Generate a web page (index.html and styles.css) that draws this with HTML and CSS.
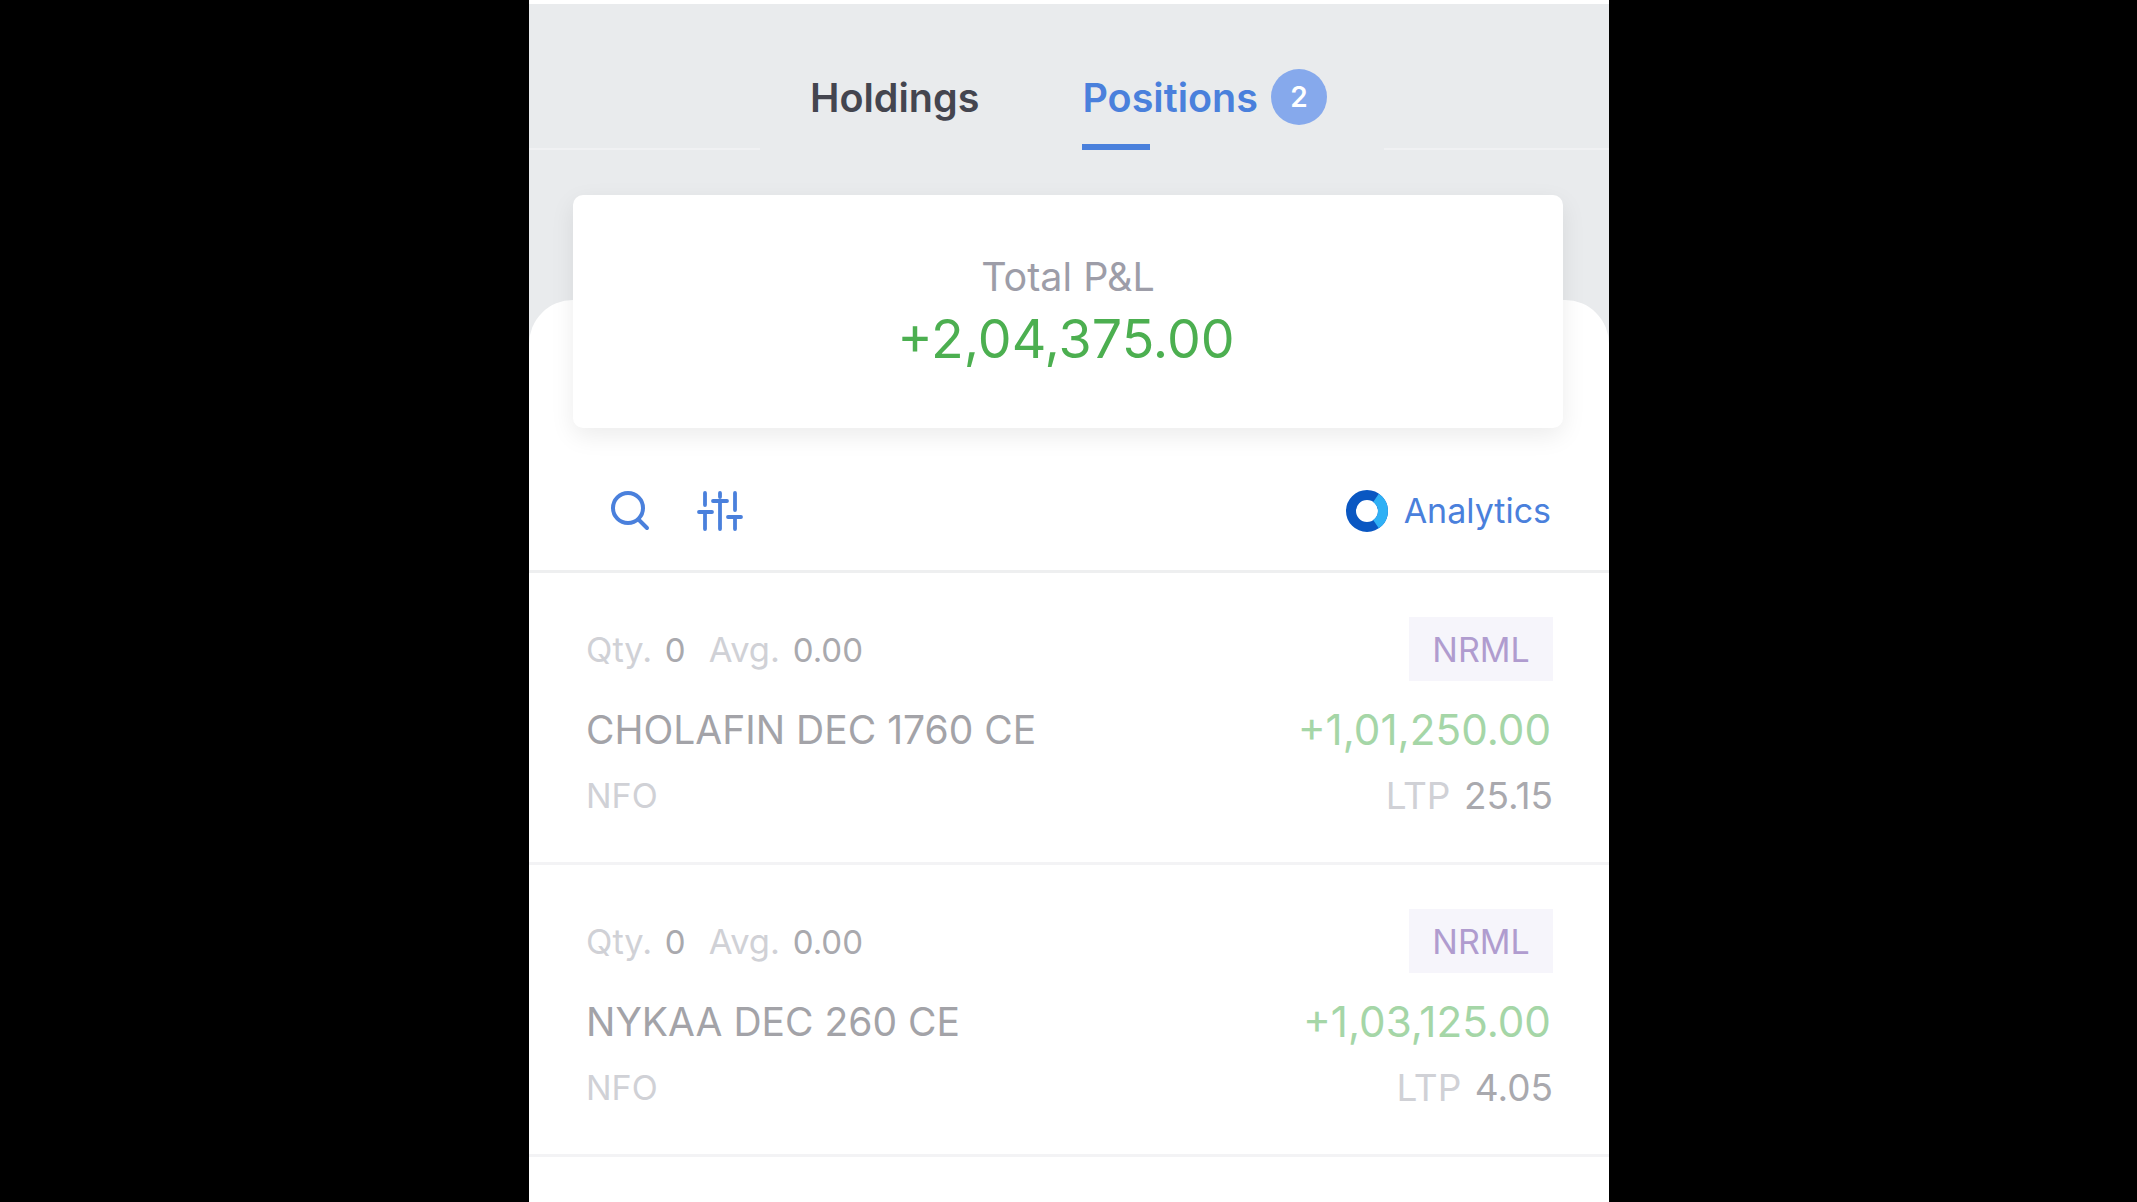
FILE: index.html
```html
<!DOCTYPE html>
<html lang="en">
<head>
    <meta charset="UTF-8">
    <title>Positions</title>
    <link rel="stylesheet" href="styles.css">
</head>
<body>
    <div class="phone">
        <div class="tab-bar">
            <span class="tab-line tab-line-left"></span>
            <div class="tabs">
                <div class="tab">Holdings</div>
                <div class="tab active"><span class="tab-label">Positions</span><span class="tab-badge">2</span></div>
            </div>
            <span class="tab-line"></span>
        </div>

        <div class="content">
            <div class="pnl-card">
                <div class="pnl-label">Total P&amp;L</div>
                <div class="pnl-value">+2,04,375.00</div>
            </div>

            <div class="toolbar">
                <svg class="icon-search" width="40" height="42" viewBox="0 0 40 42" fill="none" stroke="#4a80dc" stroke-width="4" stroke-linecap="round">
                    <circle cx="18" cy="18" r="15"/>
                    <path d="M29 30l8 8"/>
                </svg>
                <svg class="icon-sliders" width="46" height="40" viewBox="0 0 46 40" fill="none" stroke="#4a80dc" stroke-width="3.8" stroke-linecap="round">
                    <path d="M8 2v12M8 21v17M23 2v4M23 10v28M38 2v17M38 26v12"/>
                    <path d="M2 21h13M16 10h14M31 26h13"/>
                </svg>
                <div class="analytics">
                    <svg width="42" height="42" viewBox="0 0 42 42" fill="none" stroke-width="10">
                        <circle cx="21" cy="21" r="16" stroke="#0a57c2"/>
                        <path d="M30 7.8a16 16 0 0 1 0 26.4" stroke="#2fb0f5"/>
                    </svg>
                    <span>Analytics</span>
                </div>
            </div>

            <div class="position">
                <div class="position-row">
                    <div class="meta"><span class="dim">Qty.</span> <span class="val">0</span><span class="dim gap">Avg.</span> <span class="val">0.00</span></div>
                    <span class="product">NRML</span>
                </div>
                <div class="position-row name-row">
                    <span class="symbol">CHOLAFIN DEC 1760 CE</span>
                    <span class="gain">+1,01,250.00</span>
                </div>
                <div class="position-row bottom-row">
                    <span class="dim">NFO</span>
                    <span class="ltp"><span class="dim">LTP</span> <span class="val">25.15</span></span>
                </div>
            </div>

            <div class="position">
                <div class="position-row">
                    <div class="meta"><span class="dim">Qty.</span> <span class="val">0</span><span class="dim gap">Avg.</span> <span class="val">0.00</span></div>
                    <span class="product">NRML</span>
                </div>
                <div class="position-row name-row">
                    <span class="symbol">NYKAA DEC 260 CE</span>
                    <span class="gain">+1,03,125.00</span>
                </div>
                <div class="position-row bottom-row">
                    <span class="dim">NFO</span>
                    <span class="ltp"><span class="dim">LTP</span> <span class="val">4.05</span></span>
                </div>
            </div>
        </div>
    </div>
</body>
</html>
```

FILE: styles.css
```css
html, body {
    margin: 0;
    padding: 0;
    height: 100%;
    background: #000;
    overflow: hidden;
}
body {
    font-family: "Inter", "Liberation Sans", sans-serif;
}
.phone {
    width: 1080px;
    height: 1202px;
    margin-left: 529px;
    box-sizing: border-box;
    border-top: 4px solid #fff;
    background: #e9ebed;
    overflow: hidden;
}

/* tabs */
.tab-bar {
    display: flex;
    height: 146px;
}
.tab-line {
    flex: 1;
    height: 2px;
    align-self: flex-end;
    background: #f0f1f3;
}
.tab-line-left {
    flex: none;
    width: 231px;
}
.tabs {
    display: flex;
    gap: 103px;
    width: 624px;
    box-sizing: border-box;
    padding-left: 50px;
}
.tab {
    display: flex;
    align-items: center;
    gap: 13px;
    height: 146px;
    padding-top: 41px;
    box-sizing: border-box;
    font-size: 39.5px;
    font-weight: 600;
    color: #44454f;
}
.tab.active {
    color: #4a80dc;
}
.tab-label {
    position: relative;
    display: flex;
    align-items: center;
    height: 100%;
}
.tab-label::after {
    content: "";
    position: absolute;
    left: 0;
    bottom: 0;
    width: 68px;
    height: 6px;
    background: #4a80dc;
}
.tab-badge {
    width: 56px;
    height: 56px;
    margin-top: -2px;
    border-radius: 50%;
    background: #86a9ec;
    color: #fff;
    font-size: 28px;
    display: flex;
    align-items: center;
    justify-content: center;
}

/* white sheet sits under the card */
.content {
    position: relative;
    padding-top: 45px;
}
.content::before {
    content: "";
    position: absolute;
    top: 150px;
    left: 0;
    right: 0;
    height: 1200px;
    background: #fff;
    border-radius: 44px 44px 0 0;
}
.content > * {
    position: relative;
}

.pnl-card {
    width: 990px;
    height: 233px;
    margin-left: 44px;
    box-sizing: border-box;
    padding-top: 57px;
    background: #fff;
    border-radius: 10px;
    box-shadow: 0 8px 24px rgba(0,0,0,0.08);
    text-align: center;
}
.pnl-label {
    font-size: 39.5px;
    line-height: 50px;
    color: #9d9da8;
}
.pnl-value {
    font-size: 53.7px;
    line-height: 73px;
    margin-right: 4px;
    color: #4caf50;
}

.toolbar {
    display: flex;
    align-items: center;
    height: 145px;
    box-sizing: border-box;
    padding: 23px 58px 0 81px;
    border-bottom: 3px solid #eeeff0;
}
.icon-sliders {
    margin-left: 47px;
}
.analytics {
    display: flex;
    align-items: center;
    gap: 16px;
    margin-left: auto;
    font-size: 34px;
    color: #4a80dc;
}

.position {
    height: 292px;
    box-sizing: border-box;
    padding: 44px 56px 0 57px;
    border-bottom: 3px solid #f3f3f5;
    font-size: 34px;
}
.position-row {
    display: flex;
    align-items: center;
    justify-content: space-between;
}
.meta {
    font-size: 34.5px;
    word-spacing: 3px;
}
.meta .val {
    font-size: 33px;
}
.dim {
    color: #d0d1d6;
}
.val {
    color: #a9a9ae;
}
.gap {
    margin-left: 23px;
}
.product {
    width: 144px;
    height: 64px;
    line-height: 66px;
    text-align: center;
    background: #f6f5fb;
    color: #b09ccf;
}
.name-row {
    margin-top: 23px;
}
.symbol {
    font-size: 39px;
    color: #a3a3a8;
}
.gain {
    font-size: 42.2px;
    color: #a5d6a7;
    margin-right: 2px;
}
.bottom-row {
    margin-top: 20px;
}
.ltp {
    font-size: 37px;
    line-height: 41px;
    word-spacing: 3px;
}
```
